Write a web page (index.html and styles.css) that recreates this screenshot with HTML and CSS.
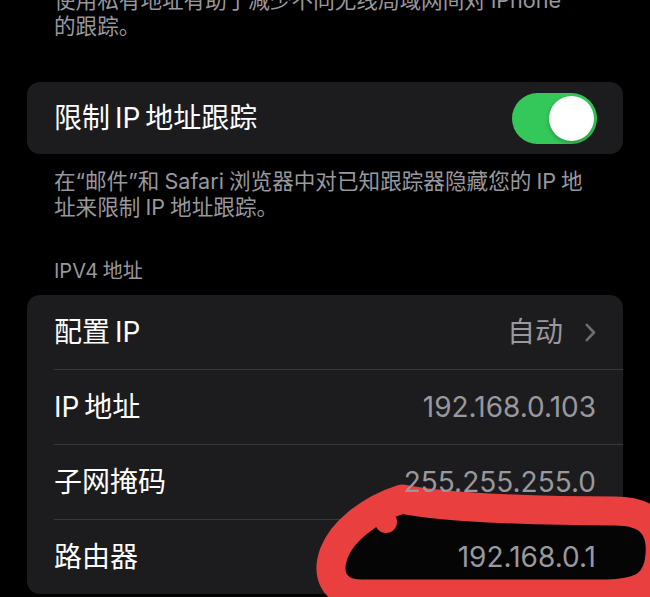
FILE: index.html
```html
<!DOCTYPE html>
<html lang="zh-CN">
<head>
<meta charset="utf-8">
<title>IP 设置</title>
<link rel="stylesheet" href="styles.css">
</head>
<body>
<div class="screen">
  <p class="note top-note">使用私有地址有助于减少不同无线局域网间对 iPhone<br>的跟踪。</p>

  <div class="card card-toggle">
    <span class="label">限制 IP 地址跟踪</span>
    <span class="switch"><span class="knob"></span></span>
  </div>

  <p class="note desc">在“邮件”和 Safari 浏览器中对已知跟踪器隐藏您的 IP 地<br>址来限制 IP 地址跟踪。</p>

  <div class="section-header">IPV4 地址</div>

  <div class="card list">
    <div class="row">
      <span class="label">配置 IP</span>
      <span class="value">自动<svg class="chevron" width="11" height="19" viewBox="0 0 11 19"><path d="M1.8 1.8 L9 9.5 L1.8 17.2" fill="none" stroke="#6d6d72" stroke-width="2.6" stroke-linecap="round" stroke-linejoin="round"/></svg></span>
    </div>
    <div class="row">
      <span class="label">IP 地址</span>
      <span class="value">192.168.0.103</span>
    </div>
    <div class="row">
      <span class="label">子网掩码</span>
      <span class="value">255.255.255.0</span>
    </div>
    <div class="row">
      <span class="label">路由器</span>
      <span class="value">192.168.0.1</span>
    </div>
  </div>

  <svg class="annotation" width="650" height="597" viewBox="0 0 650 597">
    <path d="M402 499 C 450 509, 560 511, 615 511 C 652 511, 662 530, 660 555 C 658 586, 640 594, 600 594 L 362 594 C 334 594, 326 575, 334 553 C 342 532, 368 510, 402 499 Z" fill="#050505" stroke="#e9403f" stroke-width="29" stroke-linecap="round" stroke-linejoin="round"/>
    <circle cx="386" cy="522" r="11" fill="#e9403f"/>
  </svg>
</div>
</body>
</html>
```

FILE: styles.css
```css
html, body {
  margin: 0;
  padding: 0;
  background: #000;
}

body {
  font-family: Inter, "Noto Sans CJK SC", sans-serif;
  color: #fff;
  overflow: hidden;
}

.screen {
  position: relative;
  width: 650px;
  height: 597px;
  overflow: hidden;
  padding: 0 27px;
  box-sizing: border-box;
}

.note {
  margin: 0;
  padding-left: 27px;
  font-size: 21.6px;
  line-height: 26px;
  word-spacing: -1px;
  color: #98989e;
  white-space: nowrap;
}

.top-note {
  margin-top: -13px;
}

.card {
  background: #1c1c1e;
  border-radius: 13px;
}

.card-toggle {
  margin-top: 43px;
  height: 72px;
  display: flex;
  align-items: center;
  justify-content: space-between;
  padding: 0 26px 0 27px;
}

.label {
  font-size: 28px;
  line-height: 34px;
  word-spacing: -3px;
  color: #fff;
}

.switch {
  width: 85px;
  height: 51px;
  border-radius: 26px;
  background: #34c759;
  display: flex;
  align-items: center;
  justify-content: flex-end;
  padding: 0 3px;
  box-sizing: border-box;
}

.knob {
  width: 45px;
  height: 45px;
  border-radius: 50%;
  background: #fff;
  box-shadow: 0 2px 4px rgba(0, 0, 0, 0.25);
}

.desc {
  margin-top: 14px;
}

.section-header {
  margin-top: 38px;
  padding-left: 27px;
  font-size: 20px;
  line-height: 26px;
  word-spacing: -1px;
  color: #98989e;
}

.list {
  margin-top: 11px;
  padding-left: 27px;
}

.row {
  height: 74px;
  display: flex;
  align-items: center;
  justify-content: space-between;
  padding-right: 27px;
  border-bottom: 1px solid #38383a;
}

.row:last-child {
  border-bottom: none;
}

.value {
  position: relative;
  z-index: 2;
  font-size: 28px;
  line-height: 34px;
  color: #98989e;
  display: flex;
  align-items: center;
}

.chevron {
  margin-left: 22px;
}

.annotation {
  position: absolute;
  left: 0;
  top: 0;
  z-index: 1;
  pointer-events: none;
}
```
